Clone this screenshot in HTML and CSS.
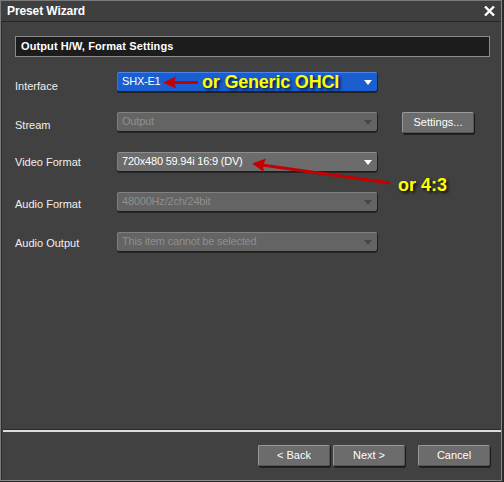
FILE: index.html
```html
<!DOCTYPE html>
<html>
<head>
<meta charset="utf-8">
<link rel="stylesheet" href="styles.css">
</head>
<body>
<div class="window">
  <div class="titlebar">
    <span class="title">Preset Wizard</span>
    <svg class="close" width="11" height="10" viewBox="0 0 11 10"><path d="M1 0.5 L10 9.5 M10 0.5 L1 9.5" stroke="#fff" stroke-width="2.4" fill="none"/></svg>
  </div>
  <div class="content">
    <div class="header">Output H/W, Format Settings</div>
    <div class="form">
      <div class="label l1">Interface</div>
      <div class="combo selected"><span>SHX-E1</span><i class="arrow"></i></div>
      <div></div>

      <div class="label l2">Stream</div>
      <div class="combo disabled"><span>Output</span><i class="arrow"></i></div>
      <button class="btn settings">Settings...</button>

      <div class="label l3">Video Format</div>
      <div class="combo"><span>720x480 59.94i 16:9 (DV)</span><i class="arrow"></i></div>
      <div></div>

      <div class="label l4">Audio Format</div>
      <div class="combo disabled"><span>48000Hz/2ch/24bit</span><i class="arrow"></i></div>
      <div></div>

      <div class="label l5">Audio Output</div>
      <div class="combo disabled"><span>This item cannot be selected</span><i class="arrow"></i></div>
      <div></div>
    </div>
  </div>
  <div class="divider"></div>
  <div class="footer">
    <button class="btn">&lt; Back</button>
    <button class="btn">Next &gt;</button>
    <button class="btn cancel">Cancel</button>
  </div>

  <svg class="arrows" width="504" height="482" viewBox="0 0 504 482">
    <g fill="#c40000" stroke="#c40000">
      <line x1="198" y1="82.5" x2="172" y2="82.5" stroke-width="3"/>
      <path d="M163 82.5 L176 76.5 L174 82.5 L176 88.5 Z" stroke="none"/>
      <line x1="390" y1="183" x2="262" y2="165" stroke-width="3"/>
      <path d="M252 163.5 L266 158.5 L263 165.5 L264 172 Z" stroke="none"/>
    </g>
  </svg>
  <div class="note n1">or Generic OHCI</div>
  <div class="note n2">or 4:3</div>
</div>
</body>
</html>
```
FILE: styles.css
```css
* { box-sizing: border-box; }
html, body { margin: 0; padding: 0; }
body {
  width: 504px;
  height: 482px;
  background: #2a2a2a;
  font-family: "Liberation Sans", Arial, sans-serif;
  font-size: 11px;
  color: #fff;
  overflow: hidden;
}
.window {
  position: relative;
  width: 502px;
  height: 481px;
  background: #414141;
  border: 1px solid #7a7a7a;
  border-right-color: #8a8a8a;
  border-bottom-color: #8a8a8a;
  box-shadow: inset 1px 1px 0 #2e2e2e;
  display: flex;
  flex-direction: column;
}
.titlebar {
  height: 21px;
  flex: none;
  display: flex;
  align-items: center;
  justify-content: space-between;
  padding: 0 6px 0 6px;
  border-bottom: 1px solid #252525;
  background: #3f3f3f;
}
.title {
  font-weight: bold;
  font-size: 12px;
  letter-spacing: -0.1px;
}
.close { display: block; }
.content {
  flex: 1;
  padding: 14px 0 0 14px;
}
.header {
  width: 475px;
  height: 21px;
  background: #1c1c1c;
  border: 1px solid #8a8a8a;
  font-weight: bold;
  font-size: 11px;
  line-height: 19px;
  padding-left: 5px;
  letter-spacing: 0.1px;
}
.form {
  margin-top: 15px;
  display: grid;
  grid-template-columns: 102px 260px 73px;
  grid-template-rows: repeat(5, 19px);
  column-gap: 0;
  row-gap: 21px;
  align-items: start;
}
.label {
  line-height: 19px;
  height: 19px;
  white-space: nowrap;
  color: #f0f0f0;
}
.l1 { padding-top: 5px; }
.l2 { padding-top: 4px; }
.l3 { padding-top: 1px; }
.l4 { padding-top: 3px; }
.l5 { padding-top: 2px; }
.combo {
  position: relative;
  height: 19px;
  border-radius: 2px;
  background: #6c6c6c;
  border-top: 1px solid #8e8e8e;
  border-left: 1px solid #7e7e7e;
  box-shadow: 1px 1px 0 #1e1e1e, 0 2px 0 #262626;
  line-height: 17px;
  padding-left: 4px;
  letter-spacing: -0.2px;
  color: #fff;
  white-space: nowrap;
}
.combo .arrow {
  position: absolute;
  right: 5px;
  top: 7px;
  width: 0;
  height: 0;
  border-left: 4.5px solid transparent;
  border-right: 4.5px solid transparent;
  border-top: 5px solid #fff;
}
.combo.disabled {
  background: #646464;
  color: #8e8e8e;
  border-top-color: #808080;
}
.combo.disabled .arrow { border-top-color: #474747; }
.combo.selected {
  background: #1b5ecf;
  border-top-color: #4d86e6;
  border-left-color: #3a74da;
  box-shadow: 1px 1px 0 #16233a, 0 2px 0 #222;
}
.btn {
  width: 72px;
  height: 21px;
  padding: 0;
  font-family: inherit;
  font-size: 11px;
  color: #fff;
  background: #6c6c6c;
  border: 1px solid #9a9a9a;
  border-right-color: #555;
  border-bottom-color: #555;
  border-radius: 2px;
  box-shadow: 1px 1px 0 #1a1a1a, 1px 2px 0 #222;
  line-height: 19px;
}
.settings { margin-left: 25px; }
.divider {
  flex: none;
  height: 3px;
  margin-left: 2px;
  border-top: 1px solid #2c2c2c;
  background: #dcdcdc;
}
.footer {
  flex: none;
  height: 48px;
  display: flex;
  justify-content: flex-end;
  align-items: flex-start;
  padding: 13px 11px 0 0;
  gap: 3px;
}
.footer .cancel { margin-left: 10px; }
.arrows {
  position: absolute;
  left: -1px;
  top: -1px;
  pointer-events: none;
}
.note {
  position: absolute;
  font-family: "Liberation Sans", Arial, sans-serif;
  font-weight: bold;
  font-size: 18px;
  color: #ffff00;
  text-shadow: 2px 2px 3px rgba(0,0,0,0.75);
  white-space: nowrap;
  line-height: 20px;
}
.n1 { left: 201px; top: 71px; letter-spacing: -0.2px; }
.n2 { left: 397px; top: 174px; }
```
